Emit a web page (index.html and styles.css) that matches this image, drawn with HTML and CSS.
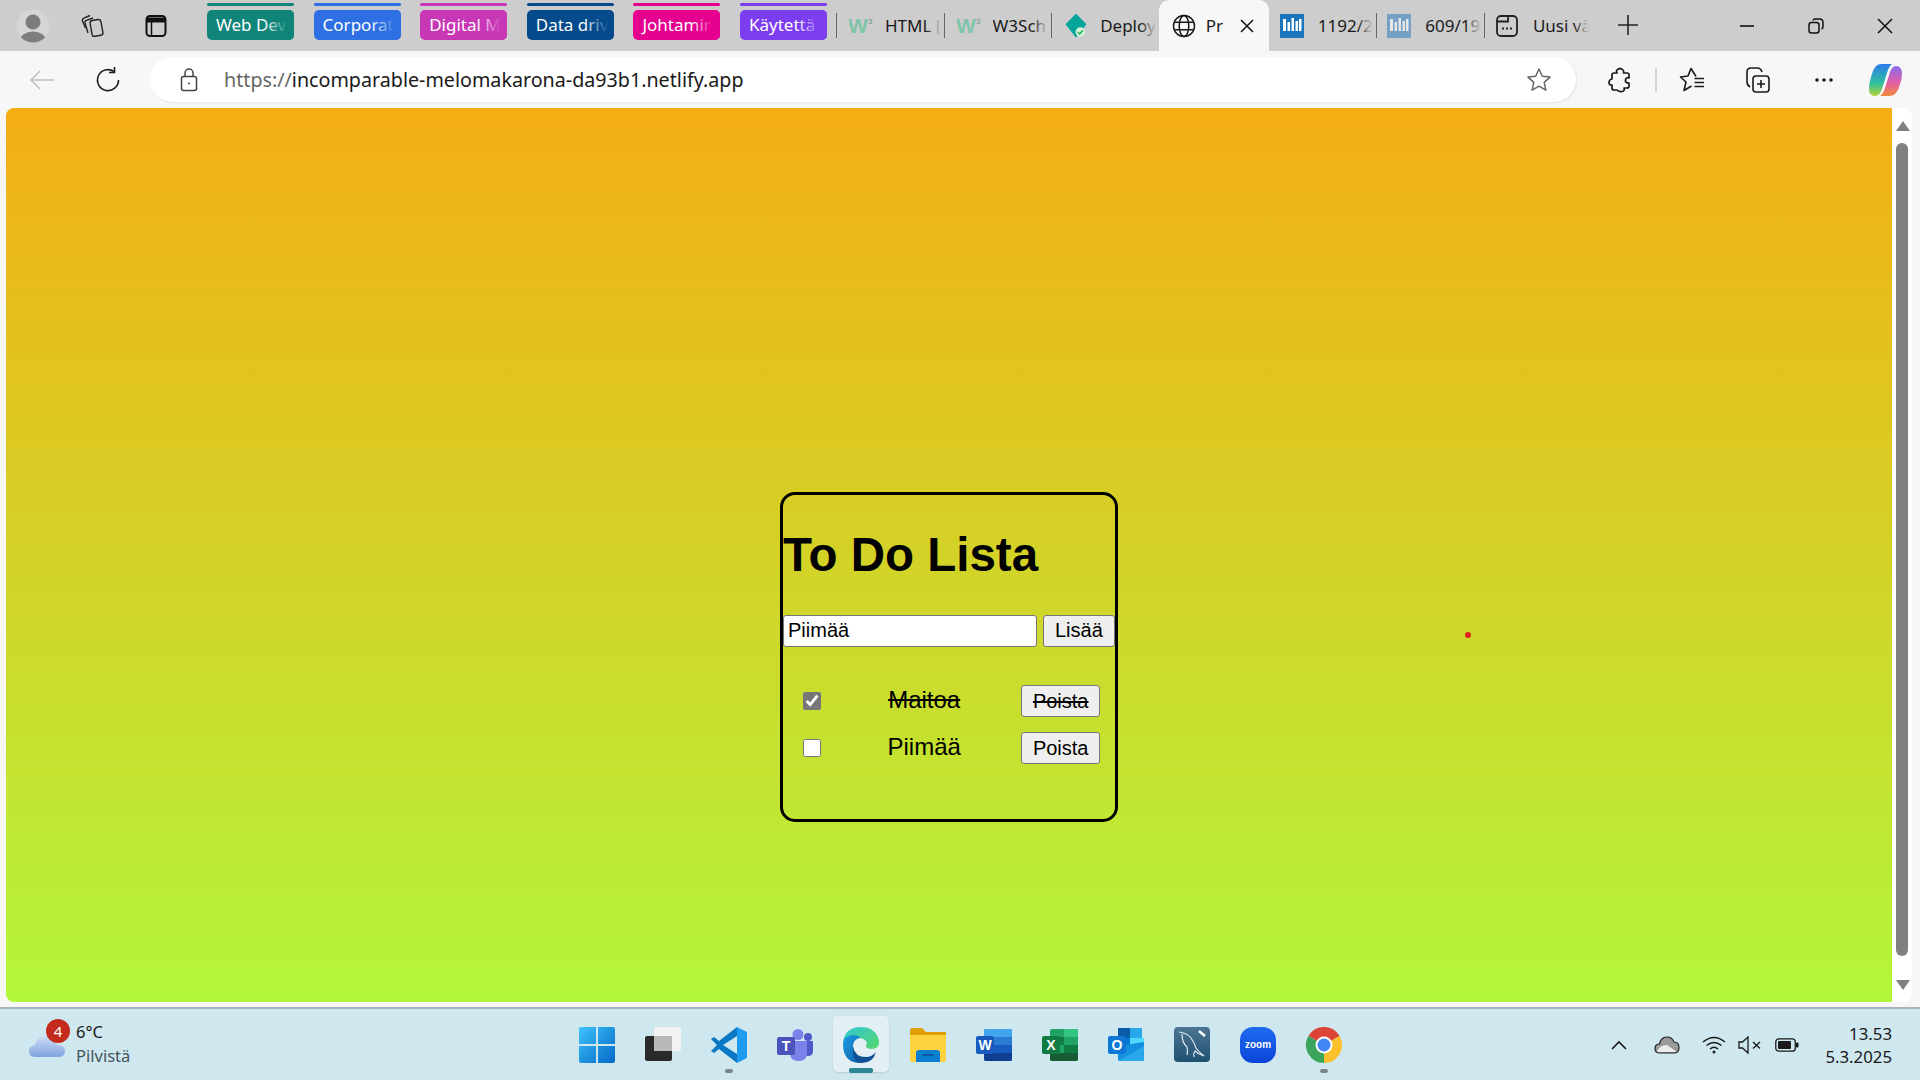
FILE: index.html
```html
<!DOCTYPE html>
<html lang="fi">

<head>
    <meta charset="utf-8">
    <title>To Do Lista</title>
    <link rel="stylesheet" href="styles.css">
</head>

<body>
    <!-- tab strip -->
    <div class="tabbar">
        <div class="chrome-btn">
            <svg width="34" height="34" viewBox="0 0 34 34"><defs><clipPath id="av"><circle cx="17" cy="17" r="16.5"/></clipPath></defs><circle cx="17" cy="17" r="16.5" fill="#d6d6d6"/><g clip-path="url(#av)" fill="#7d7d7d"><circle cx="17" cy="13" r="7.5"/><ellipse cx="17" cy="32" rx="13" ry="9.5"/></g></svg>
        </div>
        <div class="chrome-btn">
            <svg width="26" height="26" viewBox="0 0 26 26" fill="none" stroke="#222" stroke-width="1.4"><rect x="11" y="7" width="11" height="16" rx="2.5" transform="rotate(-10 16 15)"/><path d="M8 20 5 10q-.5-2 1.500-2.700L13 5"/><path d="M5.500 15 2.500 8q-.6-2 1.400-2.900L10 2.500"/></svg>
        </div>
        <div class="chrome-btn tabs-toggle">
            <svg width="22" height="24" viewBox="0 0 22 24" fill="none" stroke="#111" stroke-width="2"><rect x="1.500" y="2" width="19" height="20" rx="3.500"/><path d="M1.500 6h19" stroke-width="5"/><path d="M6.500 8v14" stroke-width="1.500"/></svg>
        </div>

        <div class="group group-teal"><i></i><span>Web Dev</span></div>
        <div class="group group-blue"><i></i><span>Corporat</span></div>
        <div class="group group-magenta"><i></i><span>Digital M</span></div>
        <div class="group group-navy"><i></i><span>Data driv</span></div>
        <div class="group group-pink"><i></i><span>Johtamir</span></div>
        <div class="group group-purple"><i></i><span>Käytettä</span></div>

        <div class="tabs">
            <div class="tab">
                <svg class="favicon" viewBox="0 0 24 20"><text x="-1" y="17" class="w3-w">W</text><text x="19" y="8" class="w3-3">3</text></svg>
                <span>HTML [</span>
            </div>
            <div class="tab">
                <svg class="favicon" viewBox="0 0 24 20"><text x="-1" y="17" class="w3-w">W</text><text x="19" y="8" class="w3-3">3</text></svg>
                <span>W3Sch</span>
            </div>
            <div class="tab">
                <svg class="favicon" viewBox="0 0 24 28"><path d="M12 1 23 12 12 26 1 12Z" fill="#05a59a" stroke="#05a59a" stroke-width="2" stroke-linejoin="round"/><circle cx="17" cy="21" r="5.500" fill="#d3f3d8"/><path d="m14 21 2.300 2.300 3.700-4" fill="none" stroke="#27ae60" stroke-width="1.800"/></svg>
                <span>Deploy</span>
            </div>
            <div class="tab tab-active">
                <svg class="favicon" viewBox="0 0 24 24" fill="none" stroke="#1a1a1a" stroke-width="1.500"><circle cx="12" cy="12" r="10.500"/><ellipse cx="12" cy="12" rx="4.800" ry="10.500"/><path d="M2.500 8.300h19M2.500 15.700h19"/></svg>
                <span class="tab-short">Pr</span>
                <svg class="tab-close" width="14" height="14" viewBox="0 0 14 14" stroke="#111" stroke-width="1.500"><path d="m1 1 12 12M13 1 1 13"/></svg>
            </div>
            <div class="tab tab-shift">
                <svg class="favicon" viewBox="0 0 24 24"><rect width="24" height="24" fill="#1b75bc"/><path d="M3 5h3v12H3zM7.500 8h2.500v9H7.500zM11.500 4h2.500v13h-2.500zM15.500 7h2.500v10h-2.500zM19 5h2.500v12H19z" fill="#fff"/></svg>
                <span>1192/2</span>
            </div>
            <div class="tab tab-shift">
                <svg class="favicon faded" viewBox="0 0 24 24"><rect width="24" height="24" fill="#1b75bc"/><path d="M3 5h3v12H3zM7.500 8h2.500v9H7.500zM11.500 4h2.500v13h-2.500zM15.500 7h2.500v10h-2.500zM19 5h2.500v12H19z" fill="#fff"/></svg>
                <span>609/19</span>
            </div>
            <div class="tab tab-shift">
                <svg class="favicon" viewBox="0 0 24 24" fill="none" stroke="#222" stroke-width="1.800"><rect x="2" y="2" width="20" height="20" rx="4"/><path d="M2 7.500h11V2"/><path d="M7 14.500h2M11 14.500h2M15 14.500h2" stroke-width="2.200"/></svg>
                <span>Uusi vä</span>
            </div>
        </div>

        <svg class="new-tab" width="22" height="22" viewBox="0 0 22 22" stroke="#222" stroke-width="1.600"><path d="M11 1v20M1 11h20"/></svg>

        <div class="window-btns">
            <svg width="16" height="16" viewBox="0 0 16 16" stroke="#111" stroke-width="1.600"><path d="M1 8h14"/></svg>
            <svg width="16" height="16" viewBox="0 0 16 16" fill="none" stroke="#111" stroke-width="1.500"><rect x="1" y="4.500" width="10" height="10.500" rx="2.500"/><path d="M5 2.500q.5-1.500 2-1.500h4.500q3.500 0 3.500 3.500V9q0 1.500-1.500 2"/></svg>
            <svg width="16" height="16" viewBox="0 0 16 16" stroke="#111" stroke-width="1.500"><path d="m1 1 14 14M15 1 1 15"/></svg>
        </div>
    </div>

    <!-- address bar and toolbar -->
    <div class="toolbar">
        <svg class="back" width="26" height="22" viewBox="0 0 26 22" fill="none" stroke="#bdbdbd" stroke-width="1.500"><path d="M25 11H2M11 2l-9 9 9 9"/></svg>
        <svg class="reload" width="26" height="26" viewBox="0 0 26 26" fill="none" stroke="#222" stroke-width="1.600"><path d="M19 4.500A10.500 10.500 0 1 0 23.500 13"/><path d="M19.500 0v5.500H14"/></svg>
        <div class="address">
            <svg width="18" height="24" viewBox="0 0 18 24" fill="none" stroke="#444" stroke-width="1.500"><rect x="1.500" y="8.500" width="15" height="14" rx="2"/><path d="M5 8.500V5a4 4 0 0 1 8 0v3.500"/><circle cx="9" cy="15.500" r="1" fill="#444" stroke="none"/></svg>
            <div class="url"><span class="scheme">https://</span>incomparable-melomakarona-da93b1.netlify.app</div>
            <svg class="star" width="26" height="26" viewBox="0 0 26 26" fill="none" stroke="#666" stroke-width="1.500" stroke-linejoin="round"><path d="m13 2 3.300 7.300 7.700.8-5.800 5.300 1.700 7.800L13 19.200 6.100 23.200l1.700-7.800L2 10.100l7.700-.8Z"/></svg>
        </div>
        <div class="tools">
            <svg width="24" height="26" viewBox="0 0 24 26" fill="none" stroke="#1a1a1a" stroke-width="1.700" stroke-linejoin="round"><path d="M9 3q3-3 6 0 1 1 .5 3H19q2 0 2 2v3q-3-1-3.500 2t3.500 3v3q0 2-2 2h-3q1 3-2 3.500T9 23H6q-2 0-2-2v-3q-3 .5-3-2.500T4 12V8q0-2 2-2h3q-1-2 0-3Z"/></svg>
            <i class="tool-sep"></i>
            <svg class="tool-fav" width="26" height="26" viewBox="0 0 26 26" fill="none" stroke="#1a1a1a" stroke-width="1.600" stroke-linejoin="round"><path d="M17 9.500 12 1.500 9 9 1.500 10l5.500 5-2 8.500 7.500-4.500"/><path d="M15.500 11.500H25M15.500 15.500H25M15.500 19.500H25"/></svg>
            <svg class="tool-coll" width="26" height="28" viewBox="0 0 26 28" fill="none" stroke="#1a1a1a" stroke-width="1.600"><rect x="8" y="10" width="16" height="16" rx="3"/><path d="M16 14v8M12 18h8"/><path d="M5 21Q2 19 2 16V6q0-4 4-4h6q4 0 5 4"/></svg>
            <svg class="tool-more" width="20" height="6" viewBox="0 0 20 6" fill="#1a1a1a"><circle cx="3" cy="3" r="1.800"/><circle cx="10" cy="3" r="1.800"/><circle cx="17" cy="3" r="1.800"/></svg>
            <svg class="tool-copilot" width="34" height="36" viewBox="0 0 34 36">
                <defs>
                    <linearGradient id="cp1" x1="0" y1="0" x2="0" y2="1"><stop offset="0" stop-color="#2a7bea"/><stop offset=".6" stop-color="#2fc1a0"/><stop offset="1" stop-color="#b5d334"/></linearGradient>
                    <linearGradient id="cp2" x1="0" y1="0" x2="0" y2="1"><stop offset="0" stop-color="#8a6cf0"/><stop offset=".55" stop-color="#e25ea8"/><stop offset="1" stop-color="#f08a3a"/></linearGradient>
                </defs>
                <path d="M12 2h11q-3 2-5 9l-5 16q-2 7-7 7-6 0-6-7 0-6 2-12 3-13 10-13Z" fill="url(#cp1)"/>
                <path d="M21 34H11q3-2 5-8l5-16q2-6 6-6 6 0 6 8 0 5-2 10-3 12-10 12Z" fill="url(#cp2)"/>
            </svg>
        </div>
    </div>

    <!-- page -->
    <div class="viewport">
        <main class="page">
            <div class="todo">
                <h1>To Do Lista</h1>
                <div class="todo-form">
                    <input type="text" class="todo-input" value="Piimää">
                    <button class="btn">Lisää</button>
                </div>
                <ul class="todo-list">
                    <li class="todo-item done">
                        <input type="checkbox" checked>
                        <span>Maitoa</span>
                        <button class="btn">Poista</button>
                    </li>
                    <li class="todo-item">
                        <input type="checkbox">
                        <span>Piimää</span>
                        <button class="btn">Poista</button>
                    </li>
                </ul>
            </div>
            <div class="red-dot"></div>
        </main>
        <div class="scrollbar">
            <i class="arrow-up"></i>
            <i class="thumb"></i>
            <i class="arrow-down"></i>
        </div>
    </div>

    <!-- taskbar -->
    <footer class="taskbar">
        <div class="weather">
            <svg class="cloud" width="38" height="24" viewBox="0 0 38 24"><defs><linearGradient id="cl" x1="0" y1="0" x2="0" y2="1"><stop offset="0" stop-color="#cfdcf6"/><stop offset="1" stop-color="#7fa4de"/></linearGradient></defs><path d="M8 23q-7 0-7-6 0-5 6-6 2-9 11-9t11 9q8 0 8 6t-7 6Z" fill="url(#cl)"/></svg>
            <div class="badge">4</div>
            <div class="weather-text">
                <div>6°C</div>
                <div class="weather-sub">Pilvistä</div>
            </div>
        </div>

        <div class="apps">
            <div class="app">
                <svg width="36" height="36" viewBox="0 0 36 36"><defs><linearGradient id="win" x1="0" y1="0" x2="1" y2="1"><stop offset="0" stop-color="#3cc4fb"/><stop offset="1" stop-color="#0767c8"/></linearGradient></defs><path d="M2 0h15v17H0V2q0-2 2-2ZM19 0h15q2 0 2 2v15H19ZM0 19h17v17H2q-2 0-2-2ZM19 19h17v15q0 2-2 2H19Z" fill="url(#win)"/></svg>
            </div>
            <div class="app">
                <svg width="36" height="36" viewBox="0 0 36 36"><rect x="0" y="9" width="27" height="25" rx="2" fill="#2a2a2a"/><rect x="9" y="0" width="27" height="24" rx="2" fill="#f3f3f3"/><rect x="9" y="9" width="18" height="15" fill="#b9b9b9"/></svg>
            </div>
            <div class="app">
                <svg width="36" height="36" viewBox="0 0 36 36"><path d="M26 0 36 5v26l-10 5Z" fill="#1f9cf0"/><path d="M26 0v9L12 18l14 9v9L8 22l-5 4-3-2 6-6-6-6 3-2 5 4Z" fill="#0a78c5"/></svg>
                <i class="pill"></i>
            </div>
            <div class="app">
                <svg width="36" height="32" viewBox="0 0 36 32"><circle cx="21" cy="5.500" r="5.500" fill="#7b83eb"/><circle cx="31" cy="8" r="4" fill="#5059c9"/><path d="M26 12h10v10q0 5-5 5h-5Z" fill="#5059c9"/><path d="M13 12h17v12q0 8-8.500 8T13 24Z" fill="#7b83eb"/><rect x="0" y="8" width="18" height="18" rx="2" fill="#4b53bc"/><text x="9" y="22" class="teams-t">T</text></svg>
            </div>
            <div class="app app-active">
                <svg width="36" height="36" viewBox="0 0 36 36"><defs><linearGradient id="ed1" x1="0" y1="0" x2="1" y2="1"><stop offset="0" stop-color="#36c6d6"/><stop offset="1" stop-color="#52d86a"/></linearGradient><linearGradient id="ed2" x1="0" y1="0" x2="1" y2="1"><stop offset="0" stop-color="#1b9de2"/><stop offset="1" stop-color="#0c59a4"/></linearGradient></defs><path d="M18 0q14 0 18 13 1 9-7 9-6 0-6-3 0-1 1-3-2-5-9-5T0 17Q1 0 18 0Z" fill="url(#ed1)"/><path d="M0 17q0-8 9-9 7 0 8 3-6 1-7 7 0 11 13 15-3 3-7 3Q0 35 0 17Z" fill="url(#ed2)"/><path d="M10 20q2 10 13 10 6 0 10-5-3 11-14 11-3 0-5-1Q9 31 10 20Z" fill="#0f4f96"/></svg>
                <i class="pill pill-active"></i>
            </div>
            <div class="app">
                <svg width="36" height="34" viewBox="0 0 36 34"><path d="M0 2q0-2 2-2h10l4 4h20v8H0Z" fill="#e0a106"/><path d="M0 7h36v25q0 2-2 2H2q-2 0-2-2Z" fill="#fdd23f"/><path d="M6 34V25q0-3 3-3h18q3 0 3 3v9Z" fill="#0c7fd0"/><path d="M12 27h12" stroke="#064f8c" stroke-width="1.500"/></svg>
            </div>
            <div class="app">
                <svg width="36" height="32" viewBox="0 0 36 32"><rect x="8" y="0" width="28" height="32" rx="2" fill="#2b7cd3"/><rect x="8" y="0" width="28" height="8" rx="2" fill="#41a5ee"/><rect x="8" y="16" width="28" height="8" fill="#185abd"/><path d="M8 24h28v6q0 2-2 2H10q-2 0-2-2Z" fill="#103f91"/><rect x="0" y="7" width="18" height="18" rx="2" fill="#185abd"/><text x="9" y="21" class="office-letter">W</text></svg>
            </div>
            <div class="app">
                <svg width="36" height="32" viewBox="0 0 36 32"><rect x="8" y="0" width="28" height="32" rx="2" fill="#21a366"/><rect x="22" y="0" width="14" height="8" fill="#33c481"/><rect x="22" y="8" width="14" height="8" fill="#21a366"/><rect x="8" y="8" width="14" height="8" fill="#107c41"/><rect x="22" y="16" width="14" height="8" fill="#107c41"/><path d="M8 24h28v6q0 2-2 2H10q-2 0-2-2Z" fill="#185c37"/><rect x="0" y="7" width="18" height="18" rx="2" fill="#107c41"/><text x="9" y="21" class="office-letter">X</text></svg>
            </div>
            <div class="app">
                <svg width="36" height="33" viewBox="0 0 36 33"><rect x="10" y="0" width="24" height="20" fill="#0a5ca8"/><rect x="22" y="0" width="12" height="10" fill="#28a8ea"/><rect x="10" y="10" width="12" height="10" fill="#0078d4"/><rect x="22" y="10" width="14" height="10" fill="#50d9ff"/><path d="M10 18 36 14v17q0 2-2 2H12q-2 0-2-2Z" fill="#1490df"/><path d="m10 33 26-15v13q0 2-2 2Z" fill="#28a8ea"/><rect x="0" y="8" width="18" height="18" rx="2" fill="#0f78d4"/><text x="9" y="22" class="office-letter">O</text></svg>
            </div>
            <div class="app">
                <svg width="36" height="35" viewBox="0 0 36 35"><defs><linearGradient id="wb" x1="0" y1="0" x2="0" y2="1"><stop offset="0" stop-color="#4d7593"/><stop offset="1" stop-color="#205071"/></linearGradient></defs><rect width="36" height="35" rx="4" fill="url(#wb)"/><path d="M5 5q8 1 12 6 3 4 5 10 2 3 8 8-6-2-9-5-2 3-1 6M8 7q0 9 5 13 1 4 0 8" fill="none" stroke="#dfe9ef" stroke-width="1.200"/><path d="m25 4 6 5" stroke="#fff" stroke-width="2.500"/></svg>
            </div>
            <div class="app">
                <svg width="36" height="36" viewBox="0 0 36 36"><defs><linearGradient id="zm" x1="0" y1="0" x2="0" y2="1"><stop offset="0" stop-color="#1e6cf0"/><stop offset="1" stop-color="#0b45d8"/></linearGradient></defs><rect width="36" height="36" rx="13" fill="url(#zm)"/><text x="18" y="21" class="zoom-word">zoom</text></svg>
            </div>
            <div class="app">
                <svg width="36" height="36" viewBox="0 0 36 36"><path d="M18 18 2.400 9A18 18 0 0 1 33.600 9Z" fill="#db4437"/><path d="M18 18 33.600 9A18 18 0 0 1 18 36Z" fill="#fbc02d"/><path d="M18 18 18 36A18 18 0 0 1 2.400 9Z" fill="#3ba55d"/><circle cx="18" cy="18" r="8.500" fill="#fff"/><circle cx="18" cy="18" r="6.500" fill="#4285f4"/></svg>
                <i class="pill"></i>
            </div>
        </div>

        <div class="tray">
            <svg class="tray-chevron" width="16" height="10" viewBox="0 0 16 10" fill="none" stroke="#1a1a1a" stroke-width="1.600"><path d="m1 9 7-7 7 7"/></svg>
            <svg class="tray-cloud" width="26" height="18" viewBox="0 0 26 18"><path d="M6 17q-5 0-5-4.500T5.500 8Q7 1 13 1q5 0 7 5 5 0 5 5.500T20 17Z" fill="#9a9a9a" stroke="#222" stroke-width="1.200"/><path d="M3 16q2-7 10-7l10 7Z" fill="#ececec"/></svg>
            <svg class="tray-wifi" width="24" height="18" viewBox="0 0 24 18" fill="none" stroke="#1a1a1a" stroke-width="1.400"><path d="M1 6q11-9 22 0M4.500 9.500q7.500-6 15 0M8 13q4-3.500 8 0"/><circle cx="12" cy="16" r="1.500" fill="#1a1a1a" stroke="none"/></svg>
            <svg class="tray-sound" width="24" height="18" viewBox="0 0 24 18" fill="none" stroke="#1a1a1a" stroke-width="1.300"><path d="M1 6h3.500L10 1v16l-5.500-5H1Z"/><path d="m15 6 7 6.500M22 6l-7 6.500"/></svg>
            <svg class="tray-battery" width="24" height="14" viewBox="0 0 24 14"><rect x=".8" y=".8" width="19.500" height="12.400" rx="3" fill="none" stroke="#1a1a1a" stroke-width="1.300"/><rect x="3" y="3" width="13" height="8" rx="1" fill="#1a1a1a"/><rect x="21" y="4.500" width="2.500" height="5" rx="1" fill="#1a1a1a"/></svg>
            <div class="clock">
                <div>13.53</div>
                <div>5.3.2025</div>
            </div>
        </div>
    </footer>
</body>

</html>
```

FILE: styles.css
```css
* {
    box-sizing: border-box;
}

body {
    margin: 0;
    height: 100vh;
    overflow: hidden;
    display: flex;
    flex-direction: column;
    background-color: #f7f7f7;
    font-family: "Noto Sans", "Liberation Sans", sans-serif;
    color: #1a1a1a;
}

/* tab strip */
.tabbar {
    height: 51px;
    flex: none;
    display: flex;
    background-color: #cdcdcd;
    padding-left: 3px;
}

.chrome-btn {
    width: 60px;
    height: 51px;
    display: flex;
    align-items: center;
    justify-content: center;
}

.tabs-toggle {
    margin-left: 3px;
    margin-right: 21px;
}

.group {
    width: 87px;
    margin-right: 19.6px;
    padding-top: 3px;
    font-size: 17px;
}

.group i {
    display: block;
    height: 3px;
    border-radius: 2px;
    margin-bottom: 4px;
    background-color: var(--pill);
}

.group span {
    display: block;
    position: relative;
    height: 30px;
    line-height: 29px;
    padding-left: 9px;
    border-radius: 5px;
    overflow: hidden;
    white-space: nowrap;
    color: #fff;
    background-color: var(--pill);
}

/* label fades out towards the pill's right edge */
.group span::after {
    content: "";
    position: absolute;
    top: 0;
    right: 0;
    bottom: 0;
    width: 30px;
    background: linear-gradient(to right, transparent, var(--pill) 80%);
}

.group-teal { --pill: #0f8479; }
.group-blue { --pill: #2e6fe3; }
.group-magenta { --pill: #c837b5; }
.group-navy { --pill: #054a8a; }
.group-pink { --pill: #e5008f; }
.group-purple { --pill: #7c3cf0; }

.tabs {
    display: flex;
    margin-left: -10.6px;
}

.tab {
    width: 107.6px;
    height: 51px;
    display: flex;
    align-items: center;
    gap: 12px;
    padding-left: 13px;
    font-size: 17px;
    white-space: nowrap;
    position: relative;
}

.tab-shift {
    padding-left: 11px;
    gap: 14px;
}

.tab::after {
    content: "";
    position: absolute;
    left: 0;
    top: 13px;
    height: 25px;
    width: 1px;
    background-color: #666;
}

.tab span {
    flex: 1;
    position: relative;
    overflow: hidden;
    margin-right: 3px;
}

.tab span::after {
    content: "";
    position: absolute;
    top: 0;
    right: 0;
    bottom: 0;
    width: 16px;
    background: linear-gradient(to right, rgba(205, 205, 205, 0), #cdcdcd);
}

.tab-active {
    width: 110px;
    gap: 10px;
    background-color: #f7f7f7;
    border-radius: 10px 10px 0 0;
}

.tab-active::after,
.tab-active + .tab::after {
    display: none;
}

.tab-active .tab-short {
    flex: none;
    width: 18px;
    margin: 0;
}

.tab-active .tab-short::after {
    display: none;
}

.tab-close {
    margin-left: 6px;
}

.favicon {
    width: 24px;
    height: 24px;
    flex: none;
}

.faded {
    opacity: 0.5;
}

.w3-w {
    font: bold 21px "Liberation Sans", sans-serif;
    fill: #7fc4a9;
}

.w3-3 {
    font: 8px "Liberation Sans", sans-serif;
    fill: #6b9a8a;
}

.new-tab {
    margin: 14px 0 0 25px;
}

.window-btns {
    display: flex;
    align-items: center;
    gap: 53px;
    margin-left: 100px;
    height: 51px;
}

/* toolbar */
.toolbar {
    height: 57px;
    flex: none;
    display: flex;
    align-items: center;
    padding-left: 29px;
}

.reload {
    margin-left: 40px;
}

.address {
    width: 1426px;
    height: 45px;
    margin-left: 29px;
    padding: 0 24px 0 30px;
    display: flex;
    align-items: center;
    background-color: #fff;
    border-radius: 23px;
    box-shadow: 1px 1px 2px rgba(0, 0, 0, 0.08);
}

.url {
    flex: 1;
    margin-left: 26px;
    font-size: 19.7px;
    white-space: nowrap;
}

.scheme {
    color: #666;
}

.tools {
    display: flex;
    align-items: center;
    margin-left: 32px;
}

.tool-sep {
    width: 2px;
    height: 24px;
    background-color: #d4d4d4;
    margin-left: 23px;
}

.tool-fav {
    margin-left: 22px;
}

.tool-coll {
    margin-left: 40px;
}

.tool-more {
    margin-left: 43px;
}

.tool-copilot {
    margin-left: 35px;
}

/* page */
.viewport {
    height: 894px;
    flex: none;
    display: flex;
    margin-left: 6px;
    margin-right: 8px;
}

.page {
    width: 1886px;
    position: relative;
    padding-top: 384px;
    display: flex;
    justify-content: center;
    align-items: flex-start;
    background: linear-gradient(to bottom, #f4ae14, #b3f63a);
    border-radius: 8px 0 0 8px;
    font-family: "Liberation Sans", Arial, sans-serif;
    color: #000;
}

.todo {
    width: 338px;
    border: 3px solid #000;
    border-radius: 15px;
    padding-bottom: 40px;
}

h1 {
    font-size: 47.5px;
    line-height: 55px;
    margin: 32px 0 33px;
}

.todo-form {
    display: flex;
    gap: 6px;
}

.todo-input {
    width: 254px;
    height: 32px;
    padding: 0 5px 2px 4px;
    border: 1px solid #767676;
    border-radius: 3px;
    font: 20px "Liberation Sans", Arial, sans-serif;
}

.btn {
    height: 32px;
    padding: 0 10.5px;
    border: 1px solid #767676;
    border-radius: 3px;
    background-color: #efefef;
    font: 20px "Liberation Sans", Arial, sans-serif;
    color: #000;
}

.todo-form .btn {
    padding: 0 11px 2px;
}

.todo-list {
    list-style: none;
    margin: 38px 15px 0 20px;
    padding: 0;
}

.todo-item {
    display: flex;
    align-items: center;
    justify-content: space-between;
    margin-bottom: 15px;
    font-size: 24px;
}

.todo-item input {
    width: 18px;
    height: 18px;
    margin: 0;
    accent-color: #767676;
}

.todo-item span {
    margin-left: 6px;
    position: relative;
    top: -1px;
}

.done span,
.done button {
    text-decoration: line-through;
}

.red-dot {
    position: absolute;
    left: 1459px;
    top: 524px;
    width: 6px;
    height: 6px;
    border-radius: 50%;
    background-color: #e0201c;
}

.scrollbar {
    flex: 1;
    position: relative;
    background-color: #fff;
    border-radius: 0 8px 8px 0;
}

.thumb {
    position: absolute;
    left: 4px;
    top: 35px;
    width: 12px;
    height: 813px;
    border-radius: 6px;
    background-color: #808080;
}

.arrow-up,
.arrow-down {
    position: absolute;
    left: 4px;
    width: 0;
    height: 0;
    border-left: 7px solid transparent;
    border-right: 7px solid transparent;
}

.arrow-up {
    top: 13px;
    border-bottom: 10px solid #808080;
}

.arrow-down {
    bottom: 12px;
    border-top: 10px solid #808080;
}

/* taskbar */
.taskbar {
    height: 73px;
    flex: none;
    margin-top: 5px;
    display: flex;
    align-items: center;
    background-color: #cfe7ef;
    border-top: 2px solid #a9b4ba;
}

.weather {
    width: 564px;
    flex: none;
    position: relative;
    padding-left: 76px;
    font-size: 16.5px;
}

.cloud {
    position: absolute;
    left: 28px;
    top: 13px;
}

.badge {
    position: absolute;
    left: 46px;
    top: -2px;
    width: 24px;
    height: 24px;
    line-height: 24px;
    border-radius: 50%;
    background-color: #c42b1c;
    color: #fff;
    text-align: center;
    font-size: 15px;
}

.weather-text {
    line-height: 24px;
    margin-top: -1px;
}

.weather-sub {
    color: #44545c;
}

.apps {
    display: flex;
}

.app {
    width: 66.1px;
    height: 71px;
    flex: none;
    display: flex;
    align-items: center;
    justify-content: center;
    position: relative;
}

.app-active::before {
    content: "";
    position: absolute;
    left: 5px;
    top: 7px;
    width: 56px;
    height: 56px;
    border-radius: 5px;
    background-color: #e3eff4;
    box-shadow: 0 1px 2px rgba(0, 0, 0, 0.12);
}

.app svg {
    position: relative;
}

.pill {
    position: absolute;
    left: 29px;
    bottom: 7px;
    width: 8px;
    height: 4px;
    border-radius: 2px;
    background-color: #7d868b;
}

.pill-active {
    left: 21px;
    width: 24px;
    bottom: 7px;
    height: 5px;
    background-color: #2b8593;
}

.teams-t,
.office-letter {
    font: bold 14px "Liberation Sans", sans-serif;
    fill: #fff;
    text-anchor: middle;
}

.zoom-word {
    font: bold 10px "Liberation Sans", sans-serif;
    fill: #fff;
    text-anchor: middle;
}

.tray {
    flex: 1;
    display: flex;
    align-items: center;
    padding-right: 28px;
}

.tray-chevron {
    margin-left: 254px;
}

.tray-cloud {
    margin-left: 27px;
}

.tray-wifi {
    margin-left: 22px;
}

.tray-sound {
    margin-left: 12px;
}

.tray-battery {
    margin-left: 13px;
}

.clock {
    margin-left: auto;
    text-align: right;
    font-size: 16.8px;
    line-height: 23px;
}
```
